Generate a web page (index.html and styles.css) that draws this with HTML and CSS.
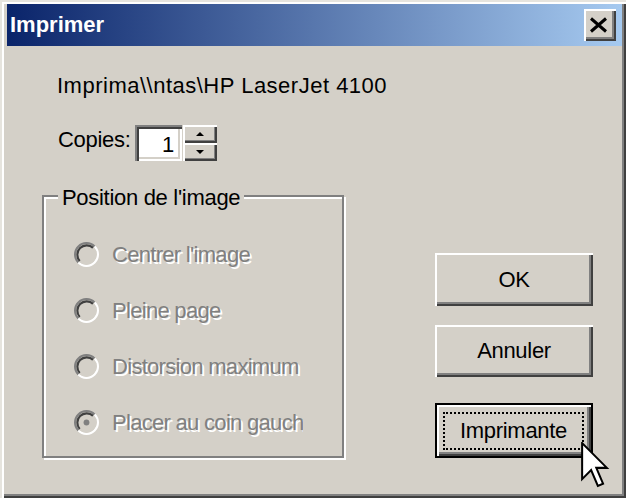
FILE: index.html
```html
<!DOCTYPE html>
<html lang="fr">
<head>
<meta charset="utf-8">
<title>Imprimer</title>
<link rel="stylesheet" href="styles.css">
</head>
<body>
<div class="window">
  <div class="titlebar">
    <span class="title">Imprimer</span>
    <div class="close">
      <svg width="19" height="16" viewBox="0 0 19 16"><path d="M2 1.5L17 14.5M17 1.5L2 14.5" stroke="#000" stroke-width="3" fill="none"/></svg>
    </div>
  </div>
  <div class="body">
    <div class="left">
      <p class="printer">Imprima\\ntas\HP LaserJet 4100</p>
      <div class="copies">
        <span class="copies-label">Copies:</span>
        <div class="field">1</div>
        <div class="spin">
          <div class="spin-btn"><span class="arrow-up"></span></div>
          <div class="spin-btn"><span class="arrow-down"></span></div>
        </div>
      </div>
      <fieldset class="group">
        <legend class="group-title">Position de l'image</legend>
        <div class="radio-row">
          <svg class="radio" viewBox="0 0 24 24"><circle cx="12" cy="12" r="8" fill="#d4d0c8"/><path d="M4.22 19.78A11 11 0 0 1 19.78 4.22" stroke="#808080" stroke-width="2" fill="none"/><path d="M19.78 4.22A11 11 0 0 1 4.22 19.78" stroke="#fff" stroke-width="2" fill="none"/><path d="M5.64 18.36A9 9 0 0 1 18.36 5.64" stroke="#404040" stroke-width="2" fill="none"/><path d="M18.36 5.64A9 9 0 0 1 5.64 18.36" stroke="#d4d0c8" stroke-width="2" fill="none"/></svg>
          <span class="radio-text">Centrer l'image</span>
        </div>
        <div class="radio-row">
          <svg class="radio" viewBox="0 0 24 24"><circle cx="12" cy="12" r="8" fill="#d4d0c8"/><path d="M4.22 19.78A11 11 0 0 1 19.78 4.22" stroke="#808080" stroke-width="2" fill="none"/><path d="M19.78 4.22A11 11 0 0 1 4.22 19.78" stroke="#fff" stroke-width="2" fill="none"/><path d="M5.64 18.36A9 9 0 0 1 18.36 5.64" stroke="#404040" stroke-width="2" fill="none"/><path d="M18.36 5.64A9 9 0 0 1 5.64 18.36" stroke="#d4d0c8" stroke-width="2" fill="none"/></svg>
          <span class="radio-text">Pleine page</span>
        </div>
        <div class="radio-row">
          <svg class="radio" viewBox="0 0 24 24"><circle cx="12" cy="12" r="8" fill="#d4d0c8"/><path d="M4.22 19.78A11 11 0 0 1 19.78 4.22" stroke="#808080" stroke-width="2" fill="none"/><path d="M19.78 4.22A11 11 0 0 1 4.22 19.78" stroke="#fff" stroke-width="2" fill="none"/><path d="M5.64 18.36A9 9 0 0 1 18.36 5.64" stroke="#404040" stroke-width="2" fill="none"/><path d="M18.36 5.64A9 9 0 0 1 5.64 18.36" stroke="#d4d0c8" stroke-width="2" fill="none"/></svg>
          <span class="radio-text">Distorsion maximum</span>
        </div>
        <div class="radio-row">
          <svg class="radio" viewBox="0 0 24 24"><circle cx="12" cy="12" r="8" fill="#d4d0c8"/><path d="M4.22 19.78A11 11 0 0 1 19.78 4.22" stroke="#808080" stroke-width="2" fill="none"/><path d="M19.78 4.22A11 11 0 0 1 4.22 19.78" stroke="#fff" stroke-width="2" fill="none"/><path d="M5.64 18.36A9 9 0 0 1 18.36 5.64" stroke="#404040" stroke-width="2" fill="none"/><path d="M18.36 5.64A9 9 0 0 1 5.64 18.36" stroke="#d4d0c8" stroke-width="2" fill="none"/><circle cx="12" cy="12" r="2.8" fill="#808080"/></svg>
          <span class="radio-text">Placer au coin gauche</span>
        </div>
      </fieldset>
    </div>
    <div class="right">
      <div class="btn btn-ok">OK</div>
      <div class="btn btn-cancel">Annuler</div>
      <div class="btn btn-default"><span class="focus">Imprimante</span></div>
    </div>
  </div>
  <svg class="cursor" width="30" height="48" viewBox="0 0 13.33 21.33"><polygon points="0.5,0.5 0.5,16.5 4.5,12.5 7.5,19.5 9.8,18.5 6.8,11.5 11.5,11.5" fill="#fff" stroke="#000" stroke-width="0.9" stroke-linejoin="miter"/></svg>
</div>
</body>
</html>
```
FILE: styles.css
```css
* { box-sizing: border-box; }
html, body { margin: 0; padding: 0; }
body {
  width: 626px;
  height: 498px;
  overflow: hidden;
  background: #d4d0c8;
  font-family: "Liberation Sans", Arial, sans-serif;
  font-size: 22px;
  letter-spacing: -0.3px;
  color: #000;
}
.window {
  position: relative;
  width: 626px;
  height: 498px;
  background: #d4d0c8;
  padding: 4px 4px 4px 7px;
  box-shadow: inset 2px 2px 0 #e6e4de, inset 4px 4px 0 #fff, inset -2px -2px 0 #404040, inset -4px -4px 0 #808080;
}
.titlebar {
  height: 42px;
  display: flex;
  align-items: center;
  justify-content: space-between;
  padding: 0 6px 0 3px;
  background: linear-gradient(to right, #0a246a, #a6caf0);
}
.title {
  color: #fff;
  font-weight: bold;
  font-size: 22px;
  letter-spacing: 0;
  line-height: 26px;
}
.close {
  width: 32px;
  height: 32px;
  display: flex;
  align-items: center;
  justify-content: center;
  padding-right: 3px;
  background: #d4d0c8;
  box-shadow: inset 2px 2px 0 #fff, inset -2px -2px 0 #404040, inset -4px -4px 0 #808080;
}
.body {
  display: flex;
  height: 448px;
}
.left {
  width: 428px;
  flex: none;
  padding-top: 27px;
}
.printer {
  margin: 0 0 0 50px;
  line-height: 26px;
  letter-spacing: 0.5px;
  white-space: nowrap;
}
.copies {
  display: flex;
  height: 36px;
  margin: 26px 0 0 51px;
}
.copies-label {
  width: 77px;
  flex: none;
  line-height: 26px;
  margin-top: 2px;
  white-space: nowrap;
}
.field {
  width: 47px;
  height: 36px;
  flex: none;
  background: #fff;
  text-align: right;
  padding: 7px 8px 0 0;
  line-height: 26px;
  box-shadow: inset 2px 2px 0 #808080, inset 4px 4px 0 #404040, inset -2px -2px 0 #fff, inset -4px -4px 0 #d4d0c8;
}
.spin {
  width: 34px;
  height: 36px;
  flex: none;
  margin-left: 1px;
  display: flex;
  flex-direction: column;
}
.spin-btn {
  flex: 1;
  display: flex;
  align-items: center;
  justify-content: center;
  background: #d4d0c8;
  box-shadow: inset 2px 2px 0 #fff, inset -2px -2px 0 #404040, inset -3px -3px 0 #808080;
}
.arrow-up {
  width: 0;
  height: 0;
  border-left: 4px solid transparent;
  border-right: 4px solid transparent;
  border-bottom: 4px solid #000;
}
.arrow-down {
  width: 0;
  height: 0;
  border-left: 4px solid transparent;
  border-right: 4px solid transparent;
  border-top: 4px solid #000;
}
.group {
  margin: 20px 0 0 35px;
  width: 302px;
  min-width: 0;
  border: 2px solid #808080;
  box-shadow: 2px 2px 0 #fff, inset 2px 2px 0 #fff;
  padding: 16px 0 5px 14px;
}
.group-title {
  padding: 3.5px 4px 0;
  line-height: 26px;
  background: #d4d0c8;
  white-space: nowrap;
}
.radio-row {
  display: flex;
  align-items: center;
  height: 56px;
  padding-left: 16px;
}
.radio {
  width: 25px;
  height: 25px;
  flex: none;
}
.radio-text {
  margin-left: 13px;
  width: 191px;
  overflow: hidden;
  white-space: nowrap;
  line-height: 30px;
  letter-spacing: -0.7px;
  color: #808080;
  text-shadow: 2px 2px 0 #fff;
}
.right {
  width: 158px;
  flex: none;
  display: flex;
  flex-direction: column;
  padding-top: 207px;
}
.btn {
  display: flex;
  align-items: center;
  justify-content: center;
  background: #d4d0c8;
  line-height: 26px;
  box-shadow: inset 2px 2px 0 #fff, inset -2px -2px 0 #404040, inset -4px -4px 0 #808080;
}
.btn-ok { height: 53px; }
.btn-cancel { height: 52px; margin-top: 19px; }
.btn-default {
  height: 55px;
  margin-top: 26px;
  align-items: stretch;
  box-shadow: inset 0 0 0 2px #000, inset 4px 4px 0 #fff, inset -4px -4px 0 #404040, inset -6px -6px 0 #808080;
}
.focus {
  flex: 1;
  display: flex;
  align-items: center;
  justify-content: center;
  margin: 9px 9px 8px 8px;
  border: 2px dotted #000;
}
.cursor {
  position: absolute;
  left: 581px;
  top: 442px;
}
```
